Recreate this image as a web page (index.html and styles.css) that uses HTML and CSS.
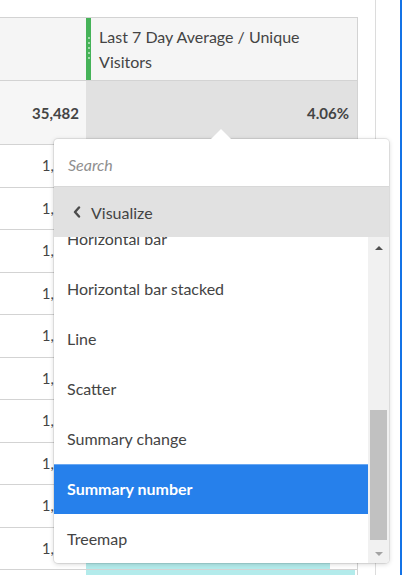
FILE: index.html
```html
<!DOCTYPE html>
<html>
<head>
<meta charset="utf-8">
<link rel="stylesheet" href="styles.css">
</head>
<body>
<div class="page">
  <div class="main">
    <div class="table">
      <div class="row head-row">
        <div class="cell dim-head"></div>
        <div class="cell metric-head">
          <div class="grip"><span></span><span></span><span></span><span></span><span></span></div>
          <div class="metric-title">Last 7 Day Average / Unique Visitors</div>
        </div>
      </div>
      <div class="row total-row">
        <div class="cell num total-left">35,482</div>
        <div class="cell num total-right">4.06%</div>
      </div>
      <div class="row data-row"><div class="cell num">1,942</div><div class="cell bar-cell"><div class="bar" style="width:88%"></div></div></div>
      <div class="row data-row"><div class="cell num">1,873</div><div class="cell bar-cell"><div class="bar" style="width:84%"></div></div></div>
      <div class="row data-row"><div class="cell num">1,752</div><div class="cell bar-cell"><div class="bar" style="width:80%"></div></div></div>
      <div class="row data-row"><div class="cell num">1,608</div><div class="cell bar-cell"><div class="bar" style="width:76%"></div></div></div>
      <div class="row data-row"><div class="cell num">1,530</div><div class="cell bar-cell"><div class="bar" style="width:72%"></div></div></div>
      <div class="row data-row"><div class="cell num">1,111</div><div class="cell bar-cell"><div class="bar" style="width:70%"></div></div></div>
      <div class="row data-row"><div class="cell num">1,394</div><div class="cell bar-cell"><div class="bar" style="width:66%"></div></div></div>
      <div class="row data-row"><div class="cell num">1,286</div><div class="cell bar-cell"><div class="bar" style="width:94%"></div></div></div>
      <div class="row data-row"><div class="cell num">1,117</div><div class="cell bar-cell"><div class="bar" style="width:78%"></div></div></div>
      <div class="row data-row"><div class="cell num">1,101</div><div class="cell bar-cell"><div class="bar" style="width:90%"></div></div></div>
      <div class="row data-row"><div class="cell num">1,095</div><div class="cell bar-cell"><div class="bar" style="width:99.3%"></div></div></div>
    </div>
  </div>
  <div class="gutter"></div>
  <div class="edge"></div>
</div>

<div class="popup">
  <div class="caret"></div>
  <div class="search">Search</div>
  <div class="back">
    <svg class="chev" width="8" height="12" viewBox="0 0 8 12"><polyline points="6,1.5 2,6 6,10.5" fill="none" stroke="#4b4b4b" stroke-width="2.4" stroke-linecap="round" stroke-linejoin="round"/></svg>
    <span>Visualize</span>
  </div>
  <div class="list-wrap">
    <div class="list">
      <div class="items">
        <div class="item">Horizontal bar</div>
        <div class="item">Horizontal bar stacked</div>
        <div class="item">Line</div>
        <div class="item">Scatter</div>
        <div class="item">Summary change</div>
        <div class="item active">Summary number</div>
        <div class="item">Treemap</div>
      </div>
    </div>
    <div class="scrollbar">
      <div class="sb-btn"><span class="tri-up"></span></div>
      <div class="sb-track"><div class="sb-thumb"></div></div>
      <div class="sb-btn"><span class="tri-down"></span></div>
    </div>
  </div>
</div>
</body>
</html>
```
FILE: styles.css
```css
html, body {
  margin: 0;
  padding: 0;
  background: #fff;
  font-family: Lato, "Noto Sans", sans-serif;
  color: #444;
  overflow: hidden;
}
.page {
  display: flex;
  width: 403px;
  height: 575px;
  overflow: hidden;
}
.main {
  width: 376px;
  border-right: 1px solid #dcdcdc;
  padding-top: 17px;
  box-sizing: border-box;
  flex: none;
}
.gutter {
  width: 24px;
  flex: none;
}
.edge {
  width: 2px;
  background: #1473e6;
  flex: none;
}
.table {
  width: 358px;
  border-top: 1px solid #d3d3d3;
  border-right: 1px solid #d3d3d3;
  box-sizing: border-box;
}
.row {
  display: grid;
  grid-template-columns: 86px 1fr;
  border-bottom: 1px solid #d3d3d3;
  box-sizing: border-box;
}
.head-row {
  height: 63px;
  background: #f5f5f5;
}
.metric-head {
  display: flex;
}
.grip {
  width: 6px;
  background: #45b258;
  display: flex;
  flex-direction: column;
  align-items: center;
  padding-top: 19px;
  gap: 3px;
}
.grip span {
  width: 2px;
  height: 2px;
  border-radius: 1px;
  background: #c2e6c6;
}
.metric-title {
  padding: 6px 40px 0 8px;
  font-size: 16px;
  line-height: 25px;
}
.total-row {
  height: 64px;
}
.cell.num {
  display: flex;
  align-items: center;
  justify-content: flex-end;
  padding-right: 7px;
  font-size: 15px;
}
.total-left {
  background: #f6f6f6;
  font-weight: 700;
}
.total-right {
  background: #e1e1e1;
  font-weight: 700;
  padding-right: 8px !important;
}
.data-row {
  height: 42.5px;
}
.data-row .cell.num {
  font-size: 14.5px;
}
.bar-cell {
  display: flex;
}
.bar {
  background: #b3ebeb;
  height: 100%;
}

.popup {
  position: absolute;
  left: 54px;
  top: 139px;
  width: 335px;
  height: 424px;
  background: #fff;
  border-radius: 4px;
  box-shadow: 0 0 0 1px rgba(0,0,0,0.07), 0 1px 5px rgba(0,0,0,0.18);
  display: flex;
  flex-direction: column;
}
.caret {
  position: absolute;
  left: 157px;
  top: -10px;
  width: 0;
  height: 0;
  border-left: 10px solid transparent;
  border-right: 10px solid transparent;
  border-bottom: 10px solid #fff;
}
.search {
  height: 48px;
  box-sizing: border-box;
  border-bottom: 1px solid #d8d8d8;
  padding-left: 14px;
  padding-top: 3px;
  display: flex;
  align-items: center;
  font-style: italic;
  font-size: 16px;
  color: #8f8f8f;
}
.back {
  height: 50px;
  background: #e1e1e1;
  display: flex;
  align-items: center;
  padding-left: 19px;
  gap: 10px;
  font-size: 16px;
  position: relative;
  z-index: 1;
}
.list-wrap {
  flex: 1;
  display: flex;
  min-height: 0;
  border-radius: 0 0 4px 4px;
  overflow: hidden;
}
.list {
  flex: 1;
  overflow: hidden;
}
.items {
  margin-top: -23px;
}
.item {
  height: 50px;
  line-height: 50px;
  padding-left: 13px;
  font-size: 16px;
}
.item.active {
  background: #2680eb;
  color: #fff;
  font-weight: 700;
  box-shadow: inset 0 1px 0 #6aa8f2;
}
.scrollbar {
  width: 21px;
  background: #f1f1f1;
  display: flex;
  flex-direction: column;
}
.sb-btn {
  height: 21px;
  display: flex;
  align-items: center;
  justify-content: center;
}
.tri-up {
  width: 0;
  height: 0;
  border-left: 4px solid transparent;
  border-right: 4px solid transparent;
  border-bottom: 4px solid #505050;
}
.tri-down {
  width: 0;
  height: 0;
  border-left: 4px solid transparent;
  border-right: 4px solid transparent;
  border-top: 4px solid #a3a3a3;
  margin-top: 2px;
}
.sb-track {
  flex: 1;
  display: flex;
  flex-direction: column;
  justify-content: flex-end;
  align-items: center;
  padding-bottom: 2px;
}
.sb-thumb {
  width: 17px;
  height: 130px;
  background: #c1c1c1;
}
```
